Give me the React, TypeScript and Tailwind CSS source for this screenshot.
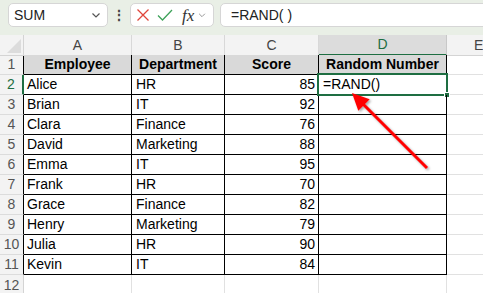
import React from "react";

const rows = [
  ["Alice", "HR", "85"],
  ["Brian", "IT", "92"],
  ["Clara", "Finance", "76"],
  ["David", "Marketing", "88"],
  ["Emma", "IT", "95"],
  ["Frank", "HR", "70"],
  ["Grace", "Finance", "82"],
  ["Henry", "Marketing", "79"],
  ["Julia", "HR", "90"],
  ["Kevin", "IT", "84"],
];

const font = { fontFamily: '"Liberation Sans", Arial, sans-serif' };

function Chevron({ className }: { className?: string }) {
  return (
    <svg viewBox="0 0 12 12" className={className} fill="none" stroke="currentColor" strokeWidth="1.2">
      <path d="M2.5 4.5 L6 8 L9.5 4.5" />
    </svg>
  );
}

export default function App() {
  return (
    <div className="relative w-[483px] h-[293px] overflow-hidden bg-white text-black" style={font}>
      {/* toolbar */}
      <div className="flex items-start h-[35px] bg-[#e9efe6] pl-2 pt-[3px]">
        <div className="shrink-0 flex items-center w-[100px] h-6 bg-white border border-[#d6d6d6] rounded-[5px] pl-[5px] pr-[5px]">
          <span className="text-[14px] text-[#222] flex-1">SUM</span>
          <Chevron className="w-[12px] h-[12px] text-[#555]" />
        </div>
        <div className="shrink-0 w-[22px] h-6 flex items-center justify-center text-[#444] text-[14px] font-bold">⋮</div>
        <div className="shrink-0 flex items-center w-[84px] h-6 bg-white border border-[#d6d6d6] rounded-[5px] pl-[5px]">
          <svg viewBox="0 0 14 14" className="w-[14px] h-[14px]" fill="none" stroke="#e0453b" strokeWidth="1.3">
            <path d="M1.5 1.5 L12.5 12.5 M12.5 1.5 L1.5 12.5" />
          </svg>
          <svg viewBox="0 0 16 14" className="w-[16px] h-[14px] ml-[7px]" fill="none" stroke="#3ea25a" strokeWidth="1.3">
            <path d="M1 7.5 L5.5 12 L15 2" />
          </svg>
          <span className="ml-[9px] text-[17px] leading-none italic text-[#333]" style={{ fontFamily: '"Liberation Serif", serif' }}>fx</span>
          <Chevron className="w-[10px] h-[10px] ml-[3px] text-[#999]" />
        </div>
        <div className="shrink-0 ml-[6px] flex items-center w-[280px] h-6 bg-white border border-[#d6d6d6] rounded-[5px] pl-[10px]">
          <span className="text-[14px] text-[#222]">=RAND( )</span>
        </div>
      </div>

      {/* grid */}
      <div className="grid grid-cols-[24px_108px_93px_94px_128px_1fr] auto-rows-[20px]">
        {/* column headers */}
        <div className="relative h-[21px] bg-[#f3f3f3] border-r border-b border-[#d4d4d4]">
          <div className="absolute right-[2px] bottom-[2px] w-0 h-0 border-l-[14px] border-l-transparent border-b-[14px] border-b-[#dcdcdc]" />
        </div>
        {["A", "B", "C"].map((c) => (
          <div key={c} className="h-[21px] bg-[#f3f3f3] border-r border-b border-r-[#d8d8d8] border-b-black flex items-center justify-center text-[14px] text-[#444]">
            {c}
          </div>
        ))}
        <div className="h-[21px] bg-[#dcdcdc] border-r border-r-[#c8c8c8] border-b-2 border-b-[#1e6e42] flex items-center justify-center text-[14px] text-[#1e6e42]">
          D
        </div>
        <div className="h-[21px] bg-[#f3f3f3] border-b border-[#d4d4d4] flex items-center pl-[27px] text-[14px] text-[#444]">
          E
        </div>

        {/* header row 1 */}
        <div className="bg-[#f3f3f3] border-r border-r-black border-b border-b-[#dcdcdc] flex items-center justify-center text-[14px] text-[#555]">1</div>
        {["Employee", "Department", "Score", "Random Number"].map((h) => (
          <div key={h} className="bg-[#d9d9d9] border-r border-b border-black flex items-center justify-center text-[14px] font-bold">
            {h}
          </div>
        ))}
        <div className="border-b border-[#e1e1e1]" />

        {rows.map((r, i) => {
          const n = i + 2;
          const sel = n === 2;
          return (
            <React.Fragment key={n}>
              <div
                className={
                  "bg-[#f3f3f3] border-b border-b-[#dcdcdc] flex items-center justify-center text-[14px] " +
                  (sel ? "border-r-2 border-r-[#1e6e42] text-[#1e6e42] bg-[#e4e4e4]" : "border-r border-r-black text-[#555]")
                }
              >
                {n}
              </div>
              <div className="border-r border-b border-black flex items-center pl-[3px] text-[14px]">{r[0]}</div>
              <div className="border-r border-b border-black flex items-center pl-[4px] text-[14px]">{r[1]}</div>
              <div className="border-r border-b border-black flex items-center justify-end pr-[3px] text-[14px]">{r[2]}</div>
              <div className="relative border-r border-b border-black flex items-center pl-[4px] text-[14px]">
                {sel && (
                  <>
                    <span>=RAND()</span>
                    <div className="absolute left-[-2px] top-[-2px] right-[-2px] bottom-[-2px] border-2 border-[#1e6e42]" />
                    <div className="absolute right-[-4px] bottom-[-4px] w-[6px] h-[6px] bg-[#1e6e42] border border-white" />
                  </>
                )}
              </div>
              <div className="border-b border-[#e1e1e1]" />
            </React.Fragment>
          );
        })}

        {/* row 12 */}
        <div className="bg-[#f3f3f3] border-r border-r-[#d4d4d4] flex items-center justify-center text-[14px] text-[#555]">12</div>
        <div className="border-r border-[#e1e1e1]" />
        <div className="border-r border-[#e1e1e1]" />
        <div className="border-r border-[#e1e1e1]" />
        <div className="border-r border-[#e1e1e1]" />
        <div />
      </div>

      {/* arrow */}
      <svg className="absolute inset-0 pointer-events-none" width="483" height="293" viewBox="0 0 483 293">
        <defs>
          <filter id="sh" x="-20%" y="-20%" width="140%" height="140%">
            <feDropShadow dx="1.5" dy="1.5" stdDeviation="1.2" floodColor="#000" floodOpacity="0.35" />
          </filter>
        </defs>
        <g filter="url(#sh)">
          <line x1="362" y1="103" x2="427" y2="168" stroke="#ff0000" strokeWidth="3" />
          <polygon points="352,93 369.7,99.3 358.3,110.7" fill="#ff0000" />
        </g>
      </svg>
    </div>
  );
}
